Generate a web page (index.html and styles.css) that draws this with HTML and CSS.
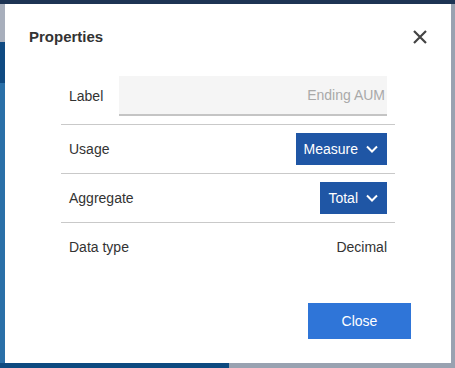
FILE: index.html
```html
<!DOCTYPE html>
<html lang="en">
<head>
    <meta charset="UTF-8">
    <meta name="viewport" content="width=device-width, initial-scale=1.0">
    <title>Properties</title>
    <link rel="stylesheet" href="styles.css">
</head>
<body>
    <div class="backdrop">
        <div class="modal">
            <div class="modal-header">
                <h2 class="modal-title">Properties</h2>
                <button type="button" class="icon-close" aria-label="Close">
                    <svg width="14" height="14" viewBox="0 0 14 14">
                        <path d="M1 1 L13 13 M13 1 L1 13" stroke="#444" stroke-width="2.2" fill="none"/>
                    </svg>
                </button>
            </div>

            <div class="props">
                <div class="prop-row prop-row-tall">
                    <span class="prop-name">Label</span>
                    <input type="text" class="prop-input" placeholder="Ending AUM">
                </div>
                <div class="prop-row">
                    <span class="prop-name">Usage</span>
                    <button type="button" class="dropdown">Measure
                        <svg width="12" height="8" viewBox="0 0 12 8"><path d="M1 1.5 L6 6.5 L11 1.5" stroke="#fff" stroke-width="2" fill="none"/></svg>
                    </button>
                </div>
                <div class="prop-row">
                    <span class="prop-name">Aggregate</span>
                    <button type="button" class="dropdown">Total
                        <svg width="12" height="8" viewBox="0 0 12 8"><path d="M1 1.5 L6 6.5 L11 1.5" stroke="#fff" stroke-width="2" fill="none"/></svg>
                    </button>
                </div>
                <div class="prop-row">
                    <span class="prop-name">Data type</span>
                    <span class="prop-value">Decimal</span>
                </div>
            </div>

            <div class="modal-footer">
                <button type="button" class="btn-primary">Close</button>
            </div>
        </div>
    </div>
</body>
</html>
```

FILE: styles.css
```css
body {
    margin: 0;
    font-family: "Liberation Sans", Arial, sans-serif;
    color: #333;
}

.backdrop {
    padding: 4px 4px 5px 5px;
    height: 359px;
    background:
        linear-gradient(#1d3454, #1d3454) 0 0 / 100% 4px no-repeat,
        linear-gradient(#0d4a80, #0d4a80) 0 100% / 229px 5px no-repeat,
        linear-gradient(#a8afbc, #a8afbc) 0 0 / 5px 42px no-repeat,
        linear-gradient(#0f4a82, #0f4a82) 0 42px / 5px 41px no-repeat,
        linear-gradient(#2a70a8, #2a70a8) 0 83px / 5px 100% no-repeat,
        #99a2b1;
}

.modal {
    background-color: #fff;
    height: 359px;
    box-sizing: border-box;
    padding-bottom: 24px;
}

.modal-header {
    display: flex;
    align-items: center;
    justify-content: space-between;
    padding: 23px 24px 0 24px;
    height: 20px;
}

.modal-title {
    margin: 0;
    font-size: 15px;
    font-weight: bold;
    line-height: 20px;
    color: #333;
}

.icon-close {
    border: none;
    background: none;
    padding: 0;
    width: 14px;
    height: 14px;
    display: flex;
    cursor: pointer;
}

.props {
    margin: 21px 56px 0 56px;
}

.prop-row {
    display: flex;
    align-items: center;
    justify-content: space-between;
    height: 48px;
    padding: 0 8px;
    border-bottom: 1px solid #c9c9c9;
    font-size: 14px;
}

.prop-row:last-child {
    border-bottom: none;
}

.prop-row-tall {
    height: 56px;
}

.prop-name {
    width: 50px;
    white-space: nowrap;
}

.prop-input {
    flex: 1;
    height: 40px;
    box-sizing: border-box;
    border: none;
    border-bottom: 2px solid #c4c4c4;
    background-color: #f5f5f5;
    font-family: inherit;
    font-size: 14px;
    text-align: right;
    padding: 0 2px 0 8px;
    color: #333;
}

.prop-input::placeholder {
    color: #a9a9a9;
}

.dropdown {
    display: flex;
    align-items: center;
    gap: 8px;
    height: 32px;
    padding: 0 9px 0 8px;
    border: none;
    background-color: #1f56a5;
    color: #fff;
    font-family: inherit;
    font-size: 14px;
    cursor: pointer;
}

.modal-footer {
    display: flex;
    justify-content: flex-end;
    padding: 32px 40px 0 0;
}

.btn-primary {
    width: 103px;
    height: 36px;
    border: none;
    background-color: #2f75d8;
    color: #fff;
    font-family: inherit;
    font-size: 14px;
    cursor: pointer;
}
```
